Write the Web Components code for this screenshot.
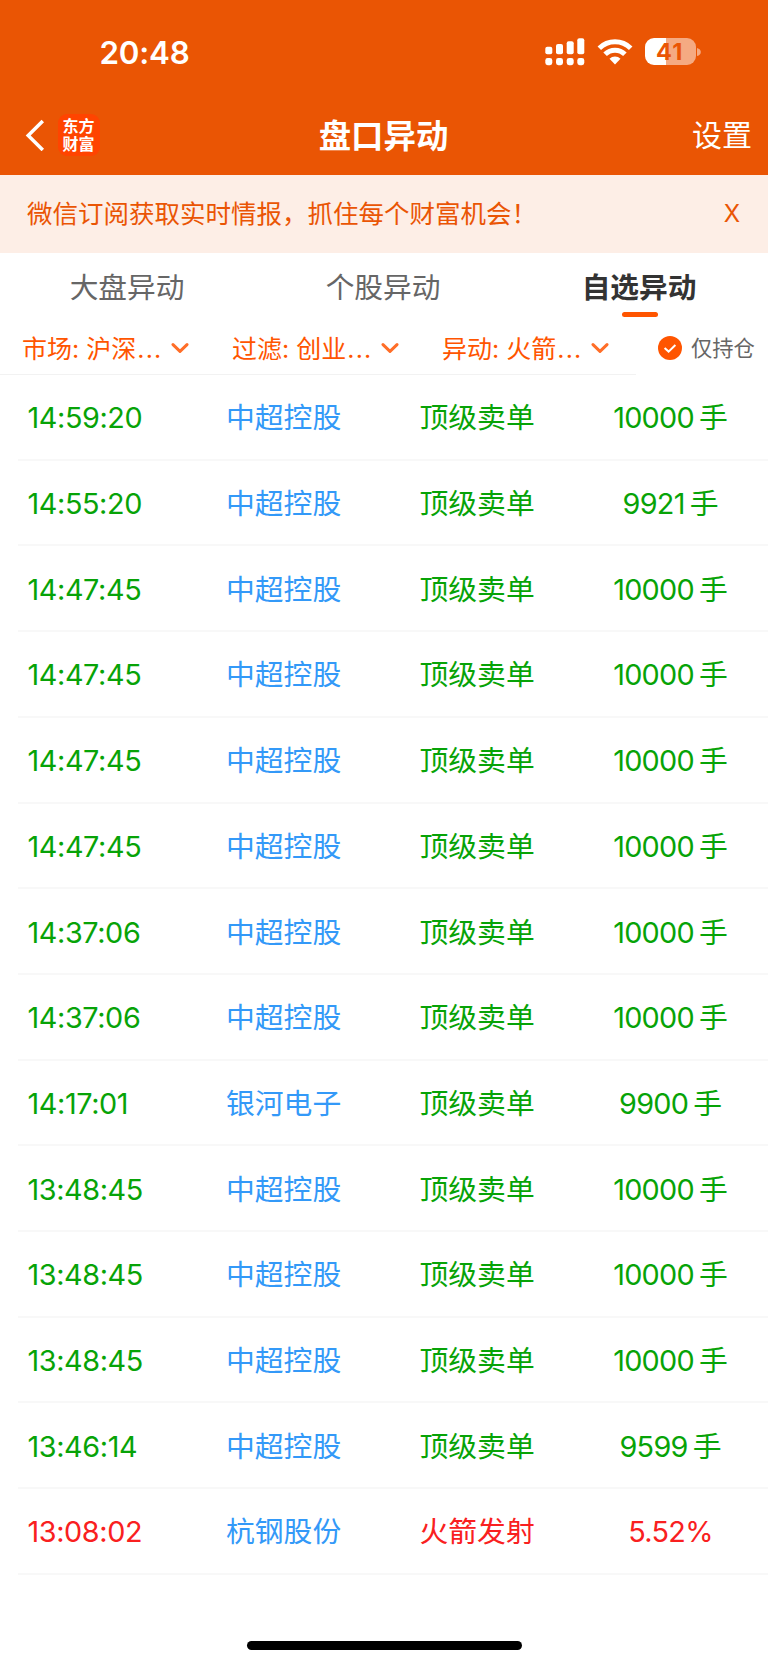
<!DOCTYPE html>
<html lang="zh-CN">
<head>
<meta charset="UTF-8">
<meta name="viewport" content="width=device-width, initial-scale=1">
<title>盘口异动</title>
<style>
  body {
    margin: 0;
    background: #fff;
    font-family: Inter, "Noto Sans CJK SC", sans-serif;
  }
</style>
</head>
<body>
<alert-page></alert-page>

<script>
class StatusBar extends HTMLElement {
    constructor() {
        super();
        this.attachShadow({ mode: "open" });
    }

    connectedCallback() {
        this.shadowRoot.innerHTML = `
      <style>
        :host {
          display: flex;
          justify-content: space-between;
          align-items: center;
          height: 103px;
          padding: 0 67px 0 99.5px;
          box-sizing: border-box;
          color: #fff;
        }
        .time {
          font-size: 31.3px;
          font-weight: 600;
          line-height: 40px;
          letter-spacing: -0.2px;
          padding-top: 2px;
        }
        svg {
          display: block;
        }
        .icons {
          display: flex;
          align-items: center;
        }
        .signal {
          margin-right: 12px;
        }
        .wifi {
          margin-right: 12px;
        }
        .battery {
          width: 51px;
          height: 27px;
          padding-left: 11.5px;
          box-sizing: border-box;
          border-radius: 9px;
          background: linear-gradient(90deg, #fff 21px, #f5aa82 21px);
          color: #ea5504;
          font-size: 23.5px;
          font-weight: 700;
          line-height: 28px;
          letter-spacing: 1.2px;
        }
        .cap {
          margin-left: 1.5px;
        }
      </style>
      <span class="time"><slot></slot></span>
      <div class="icons">
        <svg class="signal" width="40" height="28" viewBox="0 0 40 28" fill="#fff">
          <rect x="0.3" y="8.7" width="7" height="7.6" rx="2"/>
          <rect x="11" y="6" width="7" height="10.3" rx="2"/>
          <rect x="21.7" y="3.2" width="7" height="13.1" rx="2"/>
          <rect x="32.3" y="0.2" width="7" height="16.1" rx="2"/>
          <rect x="0.3" y="20" width="7" height="7.2" rx="2.4"/>
          <rect x="11" y="20" width="7" height="7.2" rx="2.4"/>
          <rect x="21.7" y="20" width="7" height="7.2" rx="2.4"/>
          <rect x="32.3" y="20" width="7" height="7.2" rx="2.4"/>
        </svg>
        <svg class="wifi" width="36" height="26" viewBox="0 0 36 26">
          <g fill="none" stroke="#fff" stroke-width="5">
            <path d="M2.3 9.2A22.4 22.4 0 0 1 33.7 9.2"/>
            <path d="M8.1 15.3A14 14 0 0 1 27.9 15.3"/>
          </g>
          <path d="M18 25.4L12.5 19.8A7.8 7.8 0 0 1 23.5 19.8Z" fill="#fff"/>
        </svg>
        <span class="battery">41</span>
        <svg class="cap" width="4" height="8" viewBox="0 0 4 8"><path d="M0 0Q3.8 1 3.8 4T0 8Z" fill="#f5aa82"/></svg>
      </div>
    `;
    }
}

class NavBar extends HTMLElement {
    constructor() {
        super();
        this.attachShadow({ mode: "open" });
    }

    connectedCallback() {
        this.shadowRoot.innerHTML = `
      <style>
        :host {
          display: grid;
          grid-template-columns: 1fr auto 1fr;
          align-items: center;
          height: 71.5px;
          padding: 0 16px 7.5px 25px;
          box-sizing: border-box;
          color: #fff;
        }
        .left {
          display: flex;
          align-items: center;
          gap: 12.5px;
        }
        .logo {
          display: grid;
          align-content: center;
          justify-content: center;
          width: 42px;
          height: 42px;
          border-radius: 9px;
          background: #ff4400;
          font-size: 16px;
          font-weight: 700;
          line-height: 18px;
        }
        .title {
          font-size: 32.4px;
          font-weight: 700;
          line-height: 40px;
          margin-left: -10px;
          padding-top: 3px;
        }
        .action {
          justify-self: end;
          font-size: 30px;
          line-height: 40px;
        }
      </style>
      <div class="left">
        <svg width="20" height="32" viewBox="0 0 20 32" fill="none" stroke="#fff" stroke-width="3.5">
          <path d="M17.8 2L3.2 16.5L17.8 31"/>
        </svg>
        <span class="logo"><span>东方</span><span>财富</span></span>
      </div>
      <span class="title"><slot></slot></span>
      <span class="action"><slot name="action"></slot></span>
    `;
    }
}

class NoticeBar extends HTMLElement {
    constructor() {
        super();
        this.attachShadow({ mode: "open" });
    }

    connectedCallback() {
        this.shadowRoot.innerHTML = `
      <style>
        :host {
          display: flex;
          justify-content: space-between;
          align-items: center;
          height: 78.5px;
          padding: 0 28px 0 27px;
          box-sizing: border-box;
          background: #fdeee6;
          color: #ea5504;
          font-size: 25.5px;
          line-height: 36px;
        }
        .close {
          font-size: 24px;
        }
      </style>
      <span><slot></slot></span>
      <span class="close">X</span>
    `;
    }
}

class TabItem extends HTMLElement {
    constructor() {
        super();
        this.attachShadow({ mode: "open" });
    }

    connectedCallback() {
        this.shadowRoot.innerHTML = `
      <style>
        :host {
          display: flex;
          flex: 1;
          flex-direction: column;
          align-items: center;
          color: #666;
          font-size: 28.7px;
          line-height: 40px;
        }
        :host([active]) {
          color: #333;
          font-weight: 700;
        }
        :host([active])::after {
          content: "";
          width: 36px;
          height: 5px;
          margin-top: 4px;
          border-radius: 2.5px;
          background: #ff5500;
        }
        span {
          margin-right: 2px;
        }
      </style>
      <span><slot></slot></span>
    `;
    }
}

class FilterItem extends HTMLElement {
    constructor() {
        super();
        this.attachShadow({ mode: "open" });
    }

    connectedCallback() {
        this.shadowRoot.innerHTML = `
      <style>
        :host {
          display: flex;
          align-items: center;
          justify-content: space-between;
          width: 210px;
          padding: 0 21px 0 22px;
          box-sizing: border-box;
          color: #ff5500;
          font-size: 25px;
          line-height: 36px;
          white-space: nowrap;
        }
        .label {
          padding-top: 1px;
        }
        .dots {
          margin-left: 1px;
          letter-spacing: 1.2px;
        }
      </style>
      <span class="label"><slot></slot><span class="dots">...</span></span>
      <svg width="18" height="12" viewBox="0 0 18 12" fill="none" stroke="#ff6e28" stroke-width="3" stroke-linecap="round" stroke-linejoin="round">
        <path d="M2 2.6L9 9.4L16 2.6"/>
      </svg>
    `;
    }
}

class HoldingCheck extends HTMLElement {
    constructor() {
        super();
        this.attachShadow({ mode: "open" });
    }

    connectedCallback() {
        this.shadowRoot.innerHTML = `
      <style>
        :host {
          display: flex;
          align-items: center;
          gap: 9px;
          color: #666;
          font-size: 21.3px;
          line-height: 30px;
        }
        span {
          padding-bottom: 1px;
        }
      </style>
      <svg width="24" height="24" viewBox="0 0 24 24">
        <circle cx="12" cy="12" r="12" fill="#ff5500"/>
        <path d="M6.6 12L10.6 15.6L17.4 9" fill="none" stroke="#fff" stroke-width="2"/>
      </svg>
      <span><slot></slot></span>
    `;
    }
}

class AlertRow extends HTMLElement {
    constructor() {
        super();
        this.attachShadow({ mode: "open" });
    }

    connectedCallback() {
        const value = this.getAttribute("value");
        const unit = this.getAttribute("unit") || "";

        this.shadowRoot.innerHTML = `
      <style>
        :host {
          display: grid;
          grid-template-columns: 198.5px 193.5px 163.5px 1fr;
          align-items: center;
          height: 85.714px;
          margin-left: 18px;
          padding: 3px 10px 0 9.5px;
          box-sizing: border-box;
          border-bottom: 2px solid #f8f8f8;
          color: #07a307;
          font-size: 28.8px;
          line-height: 40px;
        }
        :host([up]) {
          color: #f92020;
        }
        .time {
          letter-spacing: -0.4px;
        }
        .name {
          color: #3399f8;
        }
        .value {
          display: flex;
          justify-content: center;
          gap: 5px;
        }
        .number {
          letter-spacing: -0.7px;
        }
      </style>
      <span class="time">${this.getAttribute("time")}</span>
      <span class="name">${this.getAttribute("name")}</span>
      <span>${this.getAttribute("type")}</span>
      <span class="value"><span class="number">${value}</span>${unit ? `<span>${unit}</span>` : ""}</span>
    `;
    }
}

class AlertPage extends HTMLElement {
    constructor() {
        super();
        this.attachShadow({ mode: "open" });
        this.rows = [
            ["14:59:20", "中超控股", "10000"],
            ["14:55:20", "中超控股", "9921"],
            ["14:47:45", "中超控股", "10000"],
            ["14:47:45", "中超控股", "10000"],
            ["14:47:45", "中超控股", "10000"],
            ["14:47:45", "中超控股", "10000"],
            ["14:37:06", "中超控股", "10000"],
            ["14:37:06", "中超控股", "10000"],
            ["14:17:01", "银河电子", "9900"],
            ["13:48:45", "中超控股", "10000"],
            ["13:48:45", "中超控股", "10000"],
            ["13:48:45", "中超控股", "10000"],
            ["13:46:14", "中超控股", "9599"],
        ];
    }

    connectedCallback() {
        this.shadowRoot.innerHTML = `
      <style>
        :host {
          display: flex;
          flex-direction: column;
          height: 1665px;
        }
        header {
          background: #ea5504;
        }
        .tabs {
          display: flex;
          height: 72px;
          padding-top: 15px;
          box-sizing: border-box;
        }
        .filters {
          display: flex;
          height: 50px;
        }
        .dropdowns {
          display: flex;
          width: 636px;
          padding-bottom: 3px;
          box-sizing: border-box;
          border-bottom: 1px solid #f2f2f2;
        }
        holding-check {
          margin: 0 0 4px 22px;
        }
        main {
          flex: 1;
        }
        .home {
          width: 275px;
          height: 9px;
          margin: 0 auto 15px;
          border-radius: 5px;
          background: #000;
        }
      </style>
      <header>
        <status-bar>20:48</status-bar>
        <nav-bar>盘口异动<span slot="action">设置</span></nav-bar>
      </header>
      <notice-bar>微信订阅获取实时情报，抓住每个财富机会！</notice-bar>
      <div class="tabs">
        <tab-item>大盘异动</tab-item>
        <tab-item>个股异动</tab-item>
        <tab-item active>自选异动</tab-item>
      </div>
      <div class="filters">
        <div class="dropdowns">
          <filter-item>市场: 沪深</filter-item>
          <filter-item>过滤: 创业</filter-item>
          <filter-item>异动: 火箭</filter-item>
        </div>
        <holding-check>仅持仓</holding-check>
      </div>
      <main>
        ${this.rows
                .map(
                    ([time, name, value]) =>
                        `<alert-row time="${time}" name="${name}" type="顶级卖单" value="${value}" unit="手"></alert-row>`
                )
                .join("")}
        <alert-row up time="13:08:02" name="杭钢股份" type="火箭发射" value="5.52%"></alert-row>
      </main>
      <div class="home"></div>
    `;
    }
}

customElements.define("status-bar", StatusBar);
customElements.define("nav-bar", NavBar);
customElements.define("notice-bar", NoticeBar);
customElements.define("tab-item", TabItem);
customElements.define("filter-item", FilterItem);
customElements.define("holding-check", HoldingCheck);
customElements.define("alert-row", AlertRow);
customElements.define("alert-page", AlertPage);
</script>
</body>
</html>
